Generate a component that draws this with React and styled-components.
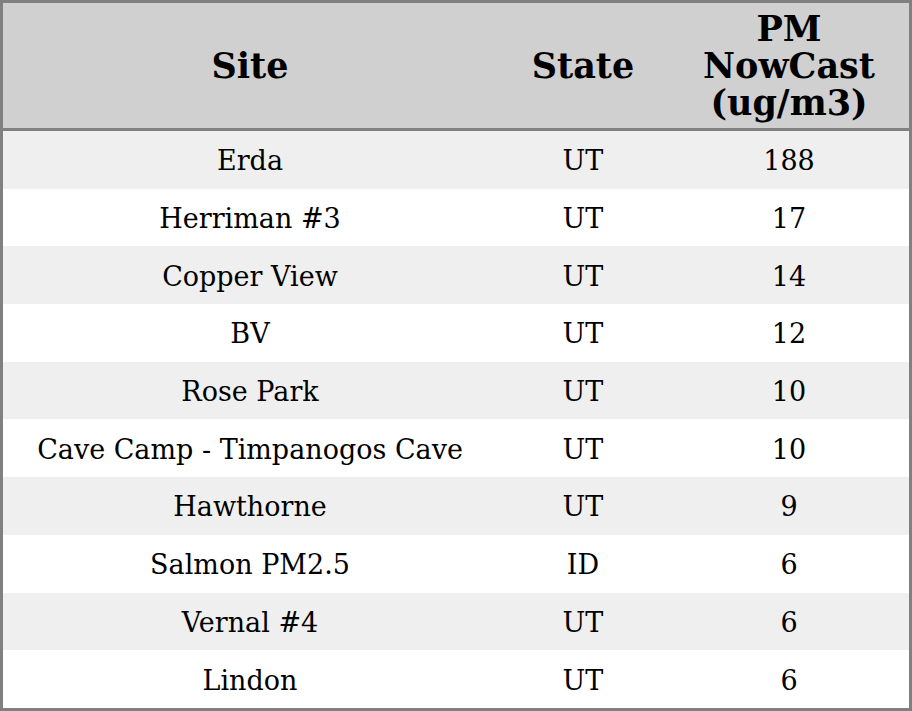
import React from "react";
import styled, { createGlobalStyle } from "styled-components";

const Global = createGlobalStyle`
  html, body { margin: 0; padding: 0; background: #ffffff; }
  body { font-family: "DejaVu Serif", serif; }
`;

const Table = styled.table`
  width: 912px;
  border: 3px solid #808080;
  border-collapse: separate;
  border-spacing: 0;
  box-sizing: border-box;
  table-layout: fixed;
  font-family: "DejaVu Serif", serif;
  color: #000;
`;

const Col = styled.col`
  width: ${(p) => p.$w}px;
`;

const HeadCell = styled.th`
  background: #d0d0d0;
  border-bottom: 3px solid #808080;
  font-size: 35px;
  font-weight: bold;
  line-height: 37px;
  height: 125px;
  padding: 0;
  text-align: center;
  vertical-align: middle;
`;

const Row = styled.tr`
  background: ${(p) => (p.$striped ? "#efefef" : "#ffffff")};
`;

const Cell = styled.td`
  font-size: 27px;
  line-height: 30px;
  height: 57.7px;
  padding: 3px 0 0;
  text-align: center;
  vertical-align: middle;
  box-sizing: border-box;
`;

const rows = [
  ["Erda", "UT", "188"],
  ["Herriman #3", "UT", "17"],
  ["Copper View", "UT", "14"],
  ["BV", "UT", "12"],
  ["Rose Park", "UT", "10"],
  ["Cave Camp - Timpanogos Cave", "UT", "10"],
  ["Hawthorne", "UT", "9"],
  ["Salmon PM2.5", "ID", "6"],
  ["Vernal #4", "UT", "6"],
  ["Lindon", "UT", "6"],
];

export default function App() {
  return (
    <>
      <Global />
      <Table>
        <colgroup>
          <Col $w={494} />
          <Col $w={172} />
          <Col $w={240} />
        </colgroup>
        <thead>
          <tr>
            <HeadCell>Site</HeadCell>
            <HeadCell>State</HeadCell>
            <HeadCell>
              PM
              <br />
              NowCast
              <br />
              (ug/m3)
            </HeadCell>
          </tr>
        </thead>
        <tbody>
          {rows.map((r, i) => (
            <Row key={i} $striped={i % 2 === 0}>
              <Cell>{r[0]}</Cell>
              <Cell>{r[1]}</Cell>
              <Cell>{r[2]}</Cell>
            </Row>
          ))}
        </tbody>
      </Table>
    </>
  );
}
